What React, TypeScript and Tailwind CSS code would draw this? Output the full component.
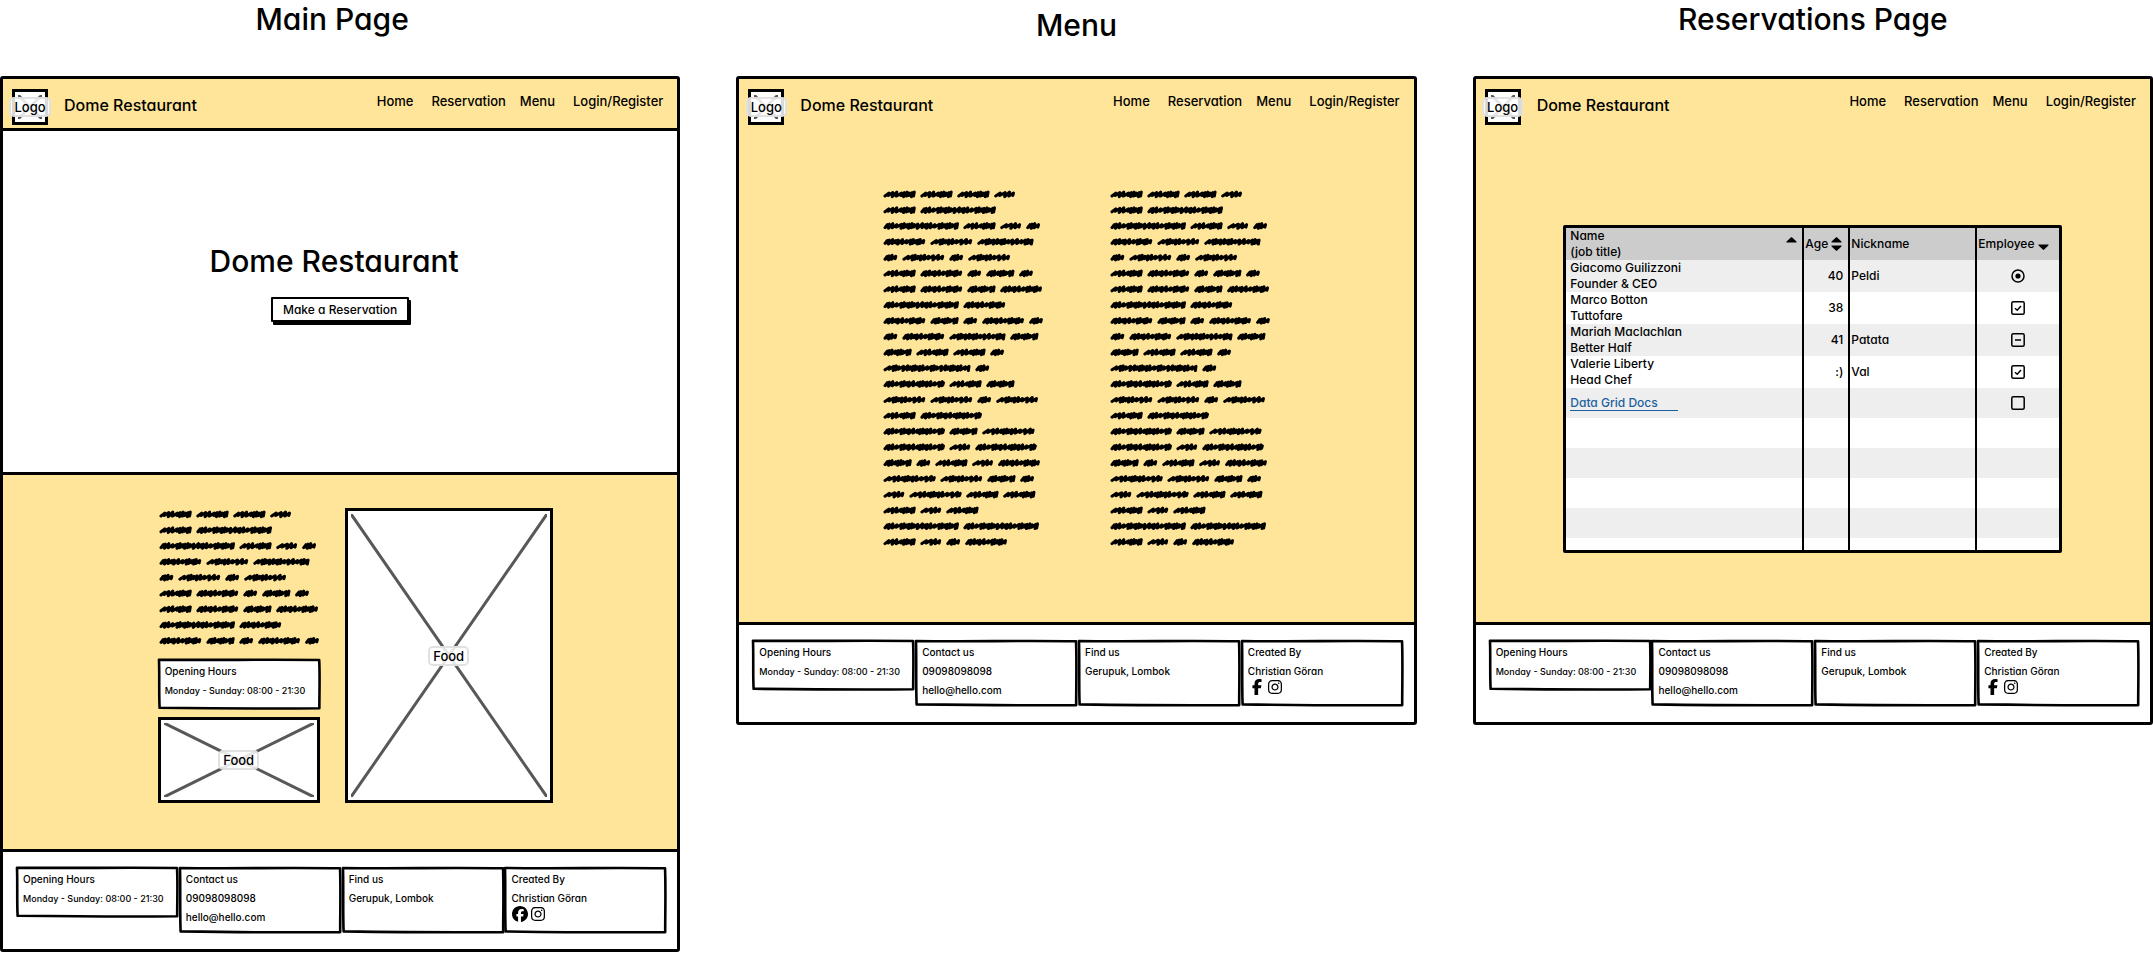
import React from "react";
import { FaFacebook, FaFacebookF, FaInstagram } from "react-icons/fa6";

/* Word lengths used by the scribbled paragraphs, in pixels. */
const WORDS: Record<string, number> = {
  t: 14, s: 21, u: 28, a: 32, N: 42, M: 42, H: 52, L: 56, J: 61, X: 75, K: 87,
};

const LINES = [
  "aaas", "aX", "Xast", "MNL", "tNtN", "aMtut", "aMuM", "XM", "MutMt", "tMLu", "uaat", "Kt",
  "Jau", "NNtN", "aJ", "JuH", "JsJ", "utasM", "HNut", "sHaa", "asa", "XX", "astM",
];

/* Horizontal distance between the strokes of each word. */
const STEPS: Record<string, number[]> = {
  a: [4, 4, 4, 5, 2, 3, 2, 3],
  s: [5, 5, 4, 5],
  t: [2, 2, 3, 4],
  u: [2, 2, 3, 4, 2, 3, 2, 5],
  N: [5, 4, 2, 3, 3, 4, 4, 5],
  M: [2, 2, 4, 3, 2, 5, 4, 4, 2, 3],
  L: [4, 4, 2, 2, 3, 4, 2, 2, 3, 4, 4, 5],
  H: [5, 5, 4, 4, 2, 3, 2, 3, 4, 5],
  J: [2, 2, 4, 4, 5, 2, 3, 2, 5, 4, 2, 3],
  X: [2, 2, 4, 4, 5, 2, 3, 2, 3, 2, 4, 5],
  K: [5, 4, 2, 3, 5, 4, 2, 3, 2, 2, 3, 3],
};

function scribble(kind: string, x: number, y: number) {
  const end = x + WORDS[kind] - 2;
  const steps = STEPS[kind];
  let cx = x + 1;
  let d = `M${cx} ${y + 1.5}`;
  for (let i = 0; cx < end; i++) {
    const step = Math.min(steps[i % steps.length], end - cx);
    const top = y - 1.4 - ((i * 7) % 3) * 0.5;
    const bottom = y + 1 + ((i * 5) % 3) * 0.6;
    d += `L${(cx + step * 0.75 + 0.8).toFixed(1)} ${top}L${(cx + step * 0.8).toFixed(1)} ${bottom}`;
    cx += step;
  }
  return d;
}

function Scribbles({ lines }: { lines: number }) {
  const pitch = 15.8;
  const d = LINES.slice(0, lines)
    .map((line, row) => {
      let x = 0;
      return line
        .split("")
        .map((kind) => {
          const part = scribble(kind, x, 6.5 + row * pitch);
          x += WORDS[kind] + 4.9;
          return part;
        })
        .join("");
    })
    .join("");
  const height = Math.ceil(lines * pitch);
  return (
    <svg width="162" height={height} viewBox={`0 0 162 ${height}`} className="block overflow-visible" aria-hidden="true">
      <path d={d} fill="none" stroke="#000" strokeWidth="3" strokeLinecap="round" strokeLinejoin="round" />
    </svg>
  );
}

function SketchCard({ className = "", children }: { className?: string; children: React.ReactNode }) {
  return (
    <div className={`relative px-[7px] pt-[3px] text-[10px] leading-[19px] ${className}`}>
      <svg
        className="absolute inset-0 h-full w-full overflow-visible"
        viewBox="0 0 100 100"
        preserveAspectRatio="none"
        aria-hidden="true"
      >
        <path
          d="M0.6 1.5 C30 2.6 70 0.8 99.5 2 C100 30 99.6 70 99.6 98.6 C70 99.4 30 98.6 1 97.6 C0.5 70 1 30 0.6 1.5Z"
          fill="#fff"
          stroke="#000"
          strokeWidth="2.6"
          strokeLinejoin="round"
          vectorEffect="non-scaling-stroke"
        />
      </svg>
      <div className="relative">{children}</div>
    </div>
  );
}

function ImageBox({ label, className = "" }: { label: string; className?: string }) {
  return (
    <div className={`relative flex items-center justify-center border-[3px] border-black bg-white ${className}`}>
      <svg
        className="absolute inset-[3px] h-[calc(100%-6px)] w-[calc(100%-6px)]"
        viewBox="0 0 100 100"
        preserveAspectRatio="none"
        aria-hidden="true"
      >
        <path
          d="M0 0L100 100M100 0L0 100"
          stroke="#585858"
          strokeWidth="3"
          strokeLinecap="round"
          vectorEffect="non-scaling-stroke"
        />
      </svg>
      <span className="relative shrink-0 rounded-[5px] border-2 border-[#d9d9d9]/80 bg-white/85 px-[3px] text-[13px] leading-4">
        {label}
      </span>
    </div>
  );
}

function Header() {
  return (
    <header className="flex h-[49px] shrink-0 items-start pl-[9px] pr-[14px]">
      <ImageBox label="Logo" className="mt-[10px] h-9 w-9 shrink-0" />
      <span className="ml-4 mt-4 text-[16px] leading-5">Dome Restaurant</span>
      <nav className="ml-auto mt-[14px] flex text-[13px] leading-4">
        <a href="#home">Home</a>
        <a href="#reservation" className="ml-[18px]">Reservation</a>
        <a href="#menu" className="ml-[14px]">Menu</a>
        <a href="#login" className="ml-[18px]">Login/Register</a>
      </nav>
    </header>
  );
}

function OpeningHours({ className = "" }: { className?: string }) {
  return (
    <SketchCard className={`h-[50px] whitespace-nowrap ${className}`}>
      <p>Opening Hours</p>
      <p className="text-[9px] leading-[19px]">Monday - Sunday: 08:00 - 21:30</p>
    </SketchCard>
  );
}

function Footer({ roundFacebook = false }: { roundFacebook?: boolean }) {
  return (
    <footer className="grid h-[100px] grid-cols-4 items-start gap-px border-t-[3px] border-black bg-white pl-[13px] pr-[11px] pt-[15px]">
      <OpeningHours />
      <SketchCard className="h-[66px]">
        <p>Contact us</p>
        <p>09098098098</p>
        <p>hello@hello.com</p>
      </SketchCard>
      <SketchCard className="h-[66px]">
        <p>Find us</p>
        <p>Gerupuk, Lombok</p>
      </SketchCard>
      <SketchCard className="h-[66px]">
        <p>Created By</p>
        <p>Christian Göran</p>
        <div className="-mt-[2px] flex items-center gap-[2px] pl-px">
          <a href="#facebook" aria-label="Facebook">
            {roundFacebook ? <FaFacebook size={16} /> : <FaFacebookF size={16} />}
          </a>
          <a href="#instagram" aria-label="Instagram">
            <FaInstagram size={16} />
          </a>
        </div>
      </SketchCard>
    </footer>
  );
}

function Screen({ title, titleClass = "", children }: { title: string; titleClass?: string; children: React.ReactNode }) {
  return (
    <section className="min-w-0">
      <h2 className={`h-[76px] text-center text-[30px] leading-[38px] ${titleClass}`}>{title}</h2>
      <div className="flex flex-col rounded-[3px] border-[3px] border-black bg-[#ffe599]">{children}</div>
    </section>
  );
}

function Triangle({ down = false }: { down?: boolean }) {
  return (
    <svg width="11" height="6" viewBox="0 0 11 6" className="block" aria-hidden="true">
      <path
        d={down ? "M1 1L10 1L5.5 5.2Z" : "M1 5L10 5L5.5 0.8Z"}
        fill="#000"
        stroke="#000"
        strokeWidth="1.2"
        strokeLinejoin="round"
      />
    </svg>
  );
}

type Mark = "radio" | "check" | "minus" | "empty";

function Choice({ mark, label }: { mark: Mark; label: string }) {
  return (
    <span className="mx-auto grid h-[14px] w-[14px]">
      <input
        type={mark === "radio" ? "radio" : "checkbox"}
        defaultChecked={mark === "radio" || mark === "check"}
        aria-label={label}
        className="col-start-1 row-start-1 m-0 h-[14px] w-[14px] appearance-none"
      />
      <svg
        viewBox="0 0 14 14"
        className="pointer-events-none col-start-1 row-start-1 h-[14px] w-[14px]"
        fill="none"
        stroke="#000"
        strokeWidth="1.5"
        aria-hidden="true"
      >
        {mark === "radio" ? <circle cx="7" cy="7" r="6" /> : <rect x="0.8" y="0.8" width="12.4" height="12.4" rx="1.5" />}
        {mark === "radio" && <circle cx="7" cy="7" r="2.6" fill="#000" stroke="none" />}
        {mark === "check" && <path d="M4 7.2L6.2 9.2L10 5" />}
        {mark === "minus" && <path d="M4 7H10" />}
      </svg>
    </span>
  );
}

const PEOPLE: { name: string; job: string; age: string; nick: string; mark: Mark }[] = [
  { name: "Giacomo Guilizzoni", job: "Founder & CEO", age: "40", nick: "Peldi", mark: "radio" },
  { name: "Marco Botton", job: "Tuttofare", age: "38", nick: "", mark: "check" },
  { name: "Mariah Maclachlan", job: "Better Half", age: "41", nick: "Patata", mark: "minus" },
  { name: "Valerie Liberty", job: "Head Chef", age: ":)", nick: "Val", mark: "check" },
];

const EMPTY_ROWS = [
  "h-[30px] bg-white",
  "h-[30px] bg-[#eee]",
  "h-[30px] bg-white",
  "h-[30px] bg-[#eee]",
  "h-[12px] bg-white",
];

function DataGrid() {
  const cell = "border-l-2 border-black px-px py-0";
  return (
    <div className="mx-auto w-[499px] rounded-[2px] border-[3px] border-black bg-white">
      <table className="w-full table-fixed border-separate border-spacing-0 text-left text-[12px] leading-4">
        <colgroup>
          <col className="w-[236px]" />
          <col className="w-[46px]" />
          <col className="w-[127px]" />
          <col />
        </colgroup>
        <thead>
          <tr className="h-8 bg-[#ccc]">
            <th className="py-0 pl-1 pr-[5px] font-medium">
              <div className="flex items-start justify-between">
                <span>Name<br />(job title)</span>
                <button type="button" aria-label="Sort by name" className="mt-[9px]"><Triangle /></button>
              </div>
            </th>
            <th className={`${cell} font-medium`}>
              <div className="flex items-center gap-[3px]">
                Age
                <button type="button" aria-label="Sort by age" className="flex flex-col gap-[2px]">
                  <Triangle />
                  <Triangle down />
                </button>
              </div>
            </th>
            <th className={`${cell} font-medium`}>Nickname</th>
            <th className={`${cell} font-medium`}>
              <div className="flex items-center gap-1">
                Employee
                <button type="button" aria-label="Sort by employee" className="mt-[6px]"><Triangle down /></button>
              </div>
            </th>
          </tr>
        </thead>
        <tbody>
          {PEOPLE.map((p) => (
            <tr key={p.name} className="h-8 odd:bg-[#eee]">
              <td className="py-0 pl-1 pr-0">{p.name}<br />{p.job}</td>
              <td className={`${cell} text-right`}><span className="pr-1">{p.age}</span></td>
              <td className={cell}>{p.nick}</td>
              <td className={cell}><Choice mark={p.mark} label={`${p.name} is an employee`} /></td>
            </tr>
          ))}
          <tr className="h-[30px] bg-[#eee]">
            <td className="py-0 pl-1 pr-0">
              <a href="#docs" className="inline-block w-[108px] border-b border-[#1d5fa0] leading-[14px] text-[#1d5fa0]">
                Data Grid Docs
              </a>
            </td>
            <td className={cell} />
            <td className={cell} />
            <td className={cell}><Choice mark="empty" label="Employee" /></td>
          </tr>
          {EMPTY_ROWS.map((row, i) => (
            <tr key={i} className={row}>
              <td className="p-0" />
              <td className={cell} />
              <td className={cell} />
              <td className={cell} />
            </tr>
          ))}
        </tbody>
      </table>
    </div>
  );
}

export default function App() {
  return (
    <main className="grid grid-cols-3 items-start gap-14 bg-white font-['Inter','Liberation_Sans',sans-serif] font-medium text-black [font-feature-settings:'cv11'_1]">
      <Screen title="Main Page" titleClass="pr-4">
        <Header />
        <div className="flex h-[347px] flex-col items-center border-y-[3px] border-black bg-white">
          <h1 className="mt-[110px] pr-3 text-[30px] leading-10">Dome Restaurant</h1>
          <button
            type="button"
            className="mt-4 h-[25px] rounded-[1px] border-2 border-black bg-white px-[10px] text-[12px] leading-4 shadow-[2px_3px_0_#000]"
          >
            Make a Reservation
          </button>
        </div>
        <div className="flex h-[374px] justify-center gap-[25px] pl-[30px] pt-[33px]">
          <div className="flex h-[295px] w-[162px] flex-col">
            <div className="pl-[2px]"><Scribbles lines={9} /></div>
            <OpeningHours className="mt-2" />
            <ImageBox label="Food" className="mt-2 flex-1" />
          </div>
          <ImageBox label="Food" className="h-[295px] w-[208px]" />
        </div>
        <Footer roundFacebook />
      </Screen>

      <Screen title="Menu" titleClass="pt-[6px]">
        <Header />
        <div className="flex h-[494px] justify-center gap-[65px] pl-1 pt-[60px]">
          <Scribbles lines={23} />
          <Scribbles lines={23} />
        </div>
        <Footer />
      </Screen>

      <Screen title="Reservations Page">
        <Header />
        <div className="h-[494px] pt-[97px]">
          <DataGrid />
        </div>
        <Footer />
      </Screen>
    </main>
  );
}
